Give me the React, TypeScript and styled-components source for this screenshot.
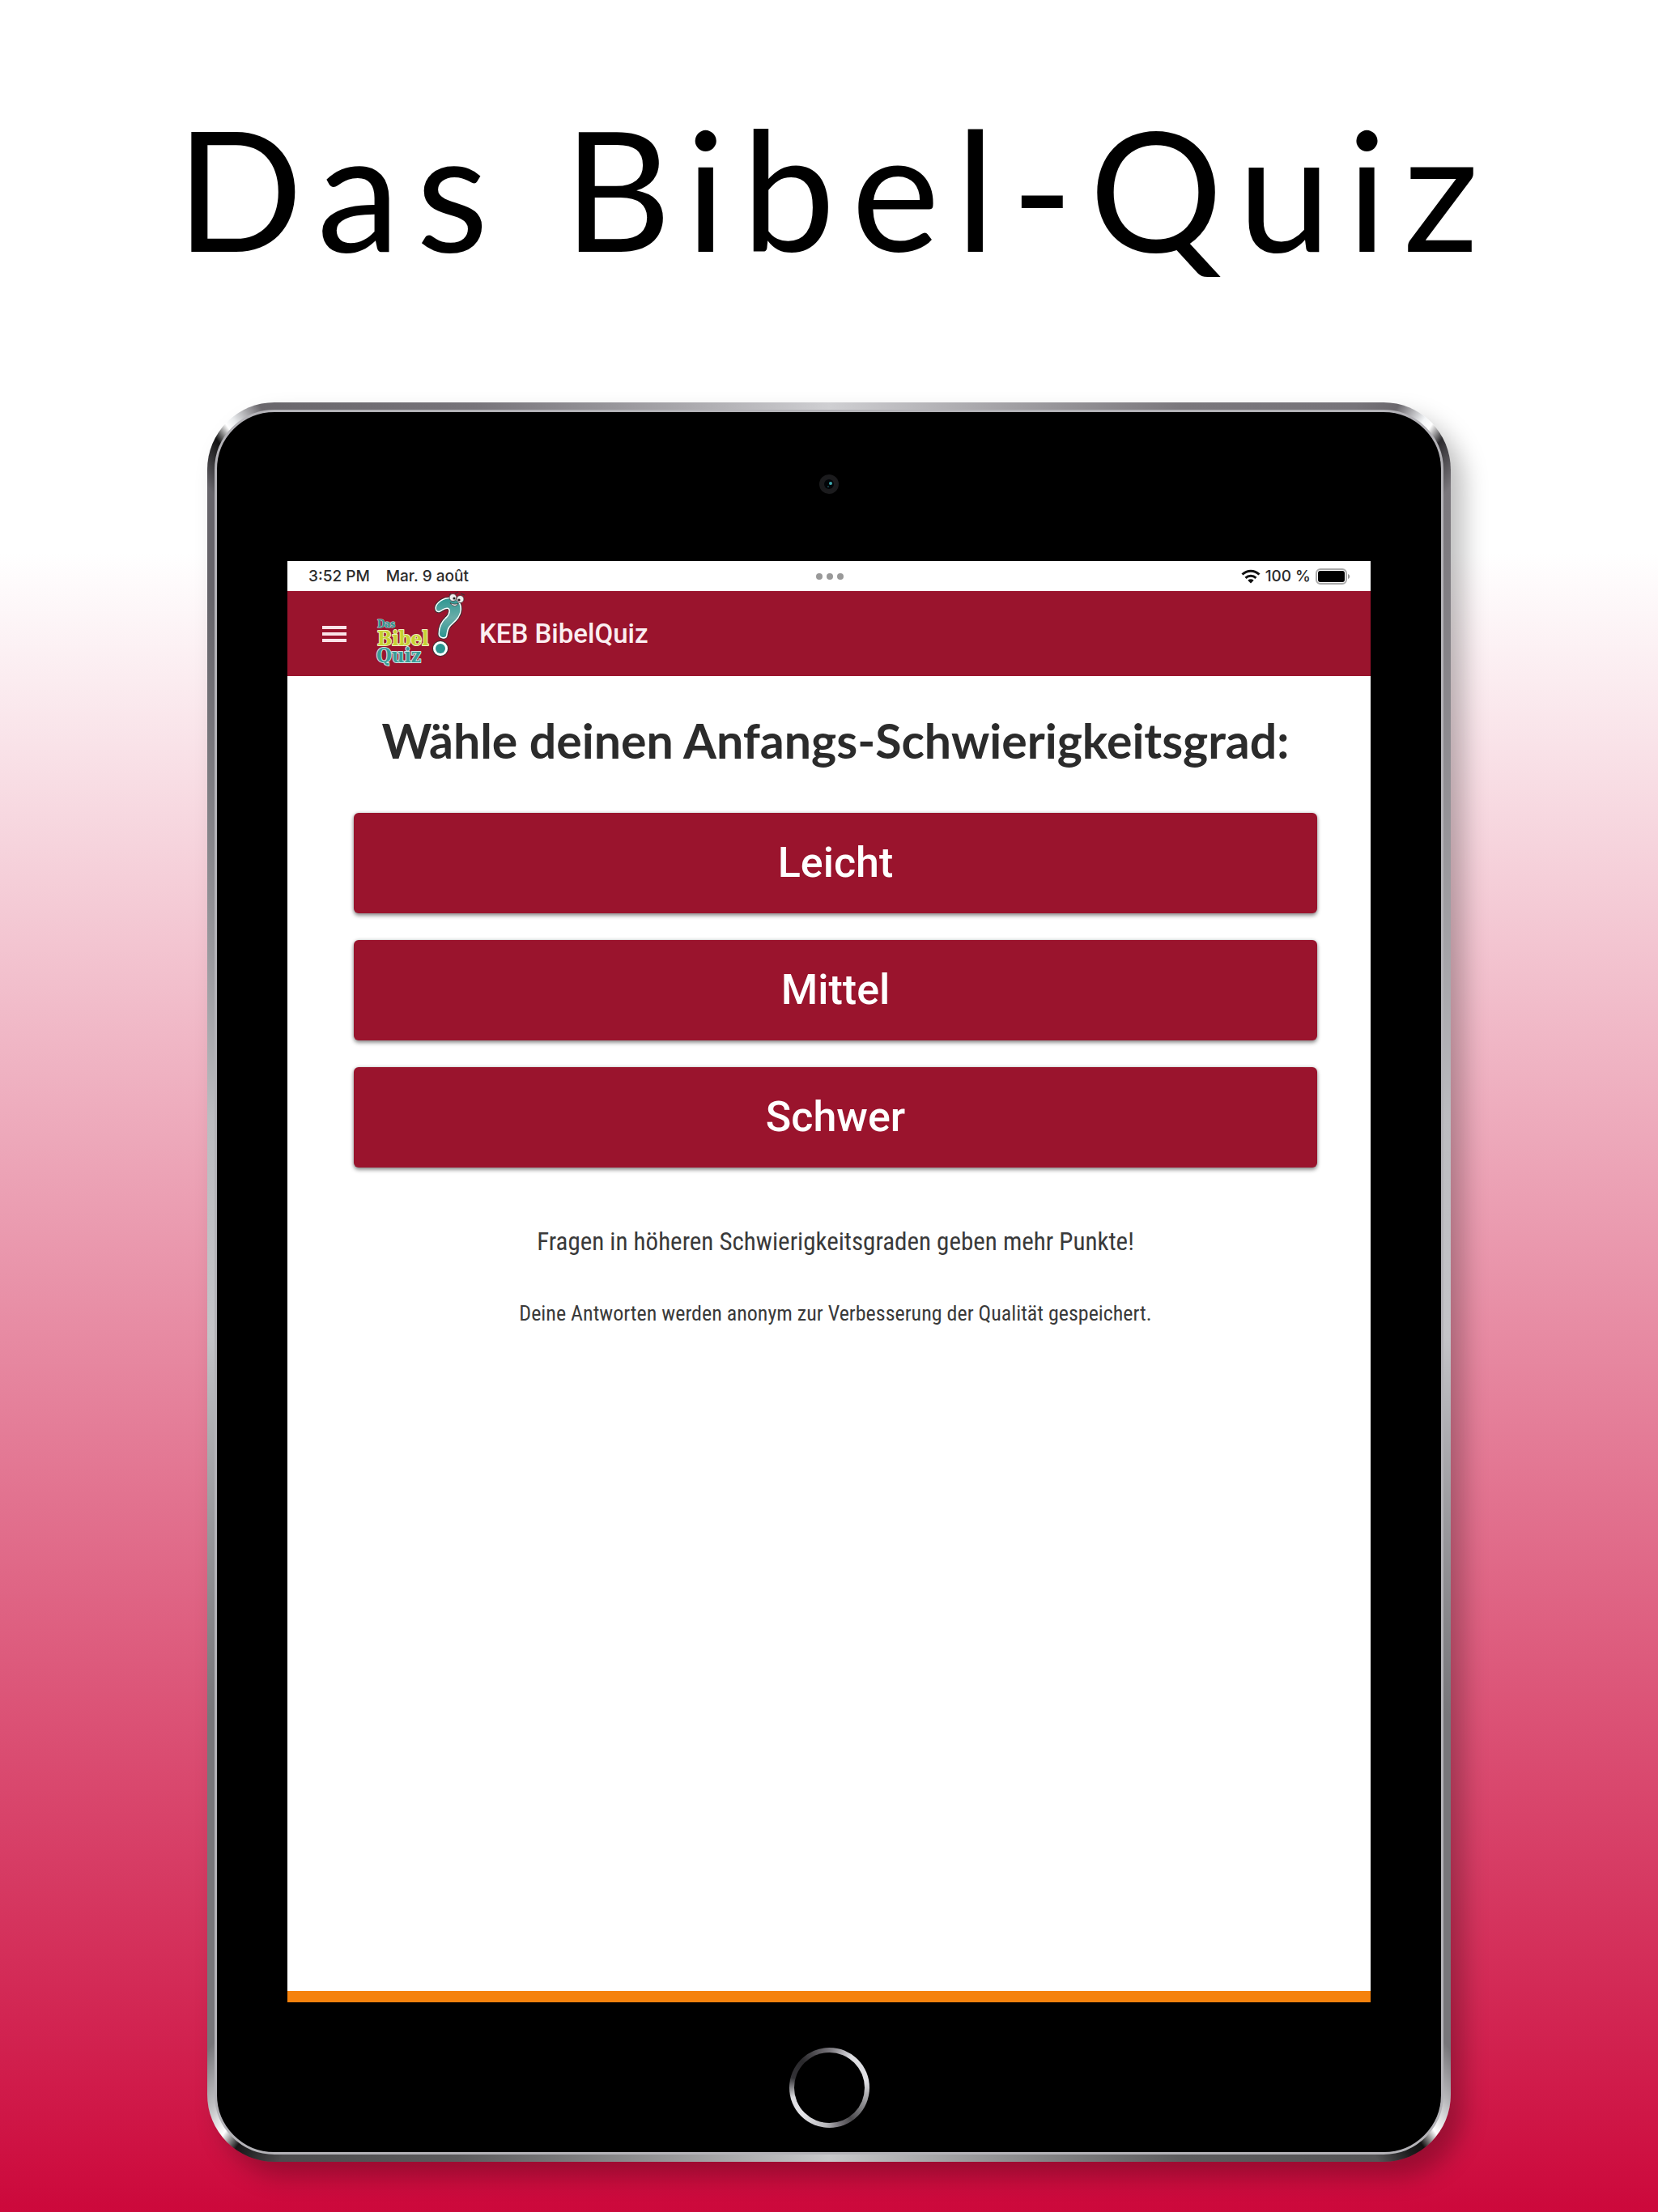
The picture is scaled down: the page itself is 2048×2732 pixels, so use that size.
import React from "react";
import styled, { createGlobalStyle } from "styled-components";

const GlobalStyle = createGlobalStyle`
  *, *::before, *::after { box-sizing: border-box; }
  body { margin: 0; }
`;

const crimson = "#9a142d";

const Page = styled.main`
  min-height: 100vh;
  display: flex;
  flex-direction: column;
  align-items: center;
  padding: 108px 0 63px;
  background: linear-gradient(180deg, #fff 0%, #fff 25%, #cc083b 100%);
`;

const PageTitle = styled.h1`
  margin: 0 0 141px;
  padding-left: 16px;
  font: 400 206px/248px Lato, "Open Sans", sans-serif;
  letter-spacing: 20px;
  text-align: center;
  color: #000;
`;

const Device = styled.section`
  width: 75%;
  padding: 9px;
  border-radius: 83px;
  background: conic-gradient(
    #cfcfd2 0deg, #7a777c 22deg, #77747a 31deg, #6a676c 33deg, #f4f6f8 34.6deg, #ffffff 35.1deg,
    #2c2b2e 36deg, #454347 36.6deg, #7a777c 38deg, #bcbcc0 75deg, #c4c4c8 95deg, #77767a 125deg,
    #77767a 141deg, #b9b9bc 143deg, #ffffff 144.5deg, #111 145.5deg, #1c1c1d 146.3deg,
    #555456 148deg, #5c5b5d 158deg, #c8c8ca 180deg, #5c5b5d 203deg, #4c4b4d 212deg,
    #161617 214.4deg, #ffffff 215.4deg, #c0c0c3 216.8deg, #77767a 219deg, #77767a 235deg,
    #c4c4c8 265deg, #bcbcc0 285deg, #66646a 318deg, #66646a 322deg, #111 324deg, #ffffff 324.9deg,
    #e8eaec 325.4deg, #6a676c 327deg, #77747a 338deg, #cfcfd2 360deg
  );
  box-shadow: 16px 18px 30px rgba(0, 0, 0, 0.26);
`;

const Bezel = styled.div`
  display: flex;
  flex-direction: column;
  align-items: center;
  padding: 77px 87px 30px;
  border: 3px solid #b4b3b8;
  border-radius: 74px;
  background: #000;
`;

const Camera = styled.svg`
  width: 24px;
  height: 24px;
  margin-bottom: 83px;
`;

const Screen = styled.div`
  width: 100%;
  aspect-ratio: 1338 / 1780;
  display: flex;
  flex-direction: column;
  background: #fff;
  border-bottom: 14px solid #f5820d;
`;

const HomeButton = styled.button`
  width: 99px;
  height: 99px;
  margin-top: 56px;
  padding: 6px;
  border: 0;
  border-radius: 50%;
  background: conic-gradient(
    #77747a 0deg, #dcdce0 35deg, #e2e2e6 80deg, #b0b0b4 100deg, #4a494c 145deg, #77747a 165deg,
    #b8b8bc 185deg, #e6e6ea 225deg, #dcdce0 255deg, #333236 285deg, #2a292c 315deg, #77747a 360deg
  );

  &::before {
    content: "";
    display: block;
    width: 100%;
    height: 100%;
    border-radius: 50%;
    background: #000;
  }
`;

const StatusBar = styled.div`
  display: grid;
  grid-template-columns: 1fr auto 1fr;
  align-items: center;
  height: 37px;
  padding: 0 24px 0 26px;
  font: 500 19px/24px Inter, Roboto, sans-serif;
  color: #2b2b2b;
`;

const StatusGroup = styled.div<{ $end?: boolean; $gap: number }>`
  display: flex;
  align-items: center;
  justify-content: ${(p) => (p.$end ? "flex-end" : "flex-start")};
  gap: ${(p) => p.$gap}px;
`;

const Dots = styled.div`
  display: flex;
  gap: 5px;
`;

const Dot = styled.span`
  width: 8px;
  height: 8px;
  border-radius: 50%;
  background: #999;
`;

const AppBar = styled.header`
  display: flex;
  align-items: center;
  height: 105px;
  padding-left: 43px;
  background: ${crimson};
`;

const MenuButton = styled.button`
  display: flex;
  padding: 0;
  margin-right: 20px;
  border: 0;
  background: none;
`;

const AppName = styled.span`
  margin-left: 8px;
  font: 500 33px/40px Roboto, sans-serif;
  color: #fbeef1;
`;

const Content = styled.div`
  display: flex;
  flex-direction: column;
  padding: 44px 66px 0 82px;
  text-align: center;
`;

const Question = styled.h2`
  margin: 0 0 53px;
  font: 700 59px/72px Lato, "Open Sans", sans-serif;
  color: #2b2b2b;
`;

const Choices = styled.div`
  display: flex;
  flex-direction: column;
  gap: 33px;
`;

const Choice = styled.button`
  height: 124px;
  border: 0;
  border-radius: 6px;
  background: ${crimson};
  box-shadow: 0 3px 5px rgba(0, 0, 0, 0.4), 0 0 4px rgba(0, 0, 0, 0.2);
  font: 500 52px/64px Roboto, sans-serif;
  color: #fff;
`;

const Note = styled.p<{ $small?: boolean }>`
  margin: ${(p) => (p.$small ? "40px" : "68px")} 0 0;
  font: 400 ${(p) => (p.$small ? 26 : 31)}px/48px "Roboto Condensed", "Open Sans Condensed", sans-serif;
  color: #3a3a3a;
`;

function Logo() {
  const mark =
    "M91 22C90 17 97 10.500 105 9.500C115 8 121 14 120.500 23C120 32 113 37 108 42C104 46 104 50 103 55C102 58.500 95 57.500 95 53C95 45 98 38 104 33C109 28 109 21 105 20.500C101 20 98 23 95 24.500C93 25.500 91 24 91 22Z";
  return (
    <svg width="136" height="105" viewBox="0 0 136 105" role="img" aria-label="Das Bibel Quiz">
      <defs>
        <linearGradient id="teal" x1="0" y1="0" x2="0" y2="1">
          <stop offset="0" stopColor="#2f9792" />
          <stop offset="0.500" stopColor="#6aada9" />
          <stop offset="1" stopColor="#2b9490" />
        </linearGradient>
      </defs>
      <g
        fontFamily='"DejaVu Serif Condensed", "DejaVu Serif", serif'
        fontWeight="700"
        strokeLinejoin="round"
        paintOrder="stroke"
      >
        <text x="18" y="45" fontSize="12" fill="#2f9792" stroke="#b9d8d6" strokeWidth="1">Das</text>
        <text x="18" y="67" fontSize="24" fill="#c6d233" stroke="#eef0c0" strokeWidth="2">Bibel</text>
        <text x="17" y="88" fontSize="24" fill="#3a9c98" stroke="#cfe6e4" strokeWidth="2">Quiz</text>
      </g>
      <path d={mark} fill="none" stroke="#3c3034" strokeWidth="5" strokeLinejoin="round" />
      <path d={mark} fill="url(#teal)" stroke="#fff" strokeWidth="3" strokeLinejoin="round" paintOrder="stroke" />
      <circle cx="96" cy="71" r="10" fill="#3c3034" />
      <circle cx="96" cy="71" r="9" fill="#fff" />
      <circle cx="96" cy="71" r="6" fill="#2b9490" />
      <path d="M108 14.500C111 19.500 116 19.500 118 15.500C115 16.500 111 16.500 108 14.500Z" fill="#fff" stroke="#3c3034" strokeWidth="0.800" />
      <path d="M107 5L109 3M114 3L118 1M121 3L126 5" stroke="#3c3034" strokeWidth="1.200" fill="none" />
      <circle cx="111.500" cy="8" r="4.500" fill="#eee" stroke="#3c3034" strokeWidth="0.800" />
      <circle cx="120.500" cy="10" r="4.500" fill="#eee" stroke="#3c3034" strokeWidth="0.800" />
      <circle cx="113" cy="9" r="1.600" fill="#222" />
      <circle cx="119" cy="11" r="1.600" fill="#222" />
    </svg>
  );
}

const levels = ["Leicht", "Mittel", "Schwer"];

export default function App() {
  return (
    <>
      <GlobalStyle />
      <Page>
        <PageTitle>Das Bibel-Quiz</PageTitle>
        <Device>
          <Bezel>
            <Camera viewBox="0 0 24 24" aria-hidden="true">
              <circle cx="12" cy="12" r="12" fill="#1b1b1d" />
              <circle cx="12" cy="12" r="6" fill="#020508" />
              <circle cx="14" cy="11" r="2" fill="#3fa9ae" />
              <circle cx="11" cy="15" r="1" fill="#17474d" />
            </Camera>
            <Screen>
              <StatusBar>
                <StatusGroup $gap={20}>
                  <span>3:52 PM</span>
                  <span>Mar. 9 août</span>
                </StatusGroup>
                <Dots>
                  <Dot />
                  <Dot />
                  <Dot />
                </Dots>
                <StatusGroup $end $gap={6}>
                  <svg width="24" height="18" viewBox="0 0 24 18" aria-hidden="true">
                    <g fill="none" stroke="#111" strokeWidth="3">
                      <path d="M1.500 6.500A15 15 0 0 1 22.500 6.500" />
                      <path d="M5.500 10.800A9.500 9.500 0 0 1 18.500 10.800" />
                    </g>
                    <path d="M12 17.500L8.300 13.800A5.400 5.400 0 0 1 15.700 13.800Z" fill="#111" />
                  </svg>
                  <span>100 %</span>
                  <svg width="44" height="20" viewBox="0 0 44 20" aria-hidden="true">
                    <rect x="1" y="1" width="37" height="18" rx="5" fill="#fff" stroke="#aaa" strokeWidth="2" />
                    <rect x="3" y="3" width="33" height="14" rx="3" fill="#000" />
                    <path d="M40 7C43 8 43 12 40 13Z" fill="#999" />
                  </svg>
                </StatusGroup>
              </StatusBar>
              <AppBar>
                <MenuButton aria-label="Menü">
                  <svg width="30" height="20" viewBox="0 0 30 20" aria-hidden="true">
                    <path d="M0 2H30M0 10H30M0 18H30" stroke="#fbe3e8" strokeWidth="4" />
                  </svg>
                </MenuButton>
                <Logo />
                <AppName>KEB BibelQuiz</AppName>
              </AppBar>
              <Content>
                <Question>Wähle deinen Anfangs-Schwierigkeitsgrad:</Question>
                <Choices>
                  {levels.map((level) => (
                    <Choice key={level}>{level}</Choice>
                  ))}
                </Choices>
                <Note>Fragen in höheren Schwierigkeitsgraden geben mehr Punkte!</Note>
                <Note $small>Deine Antworten werden anonym zur Verbesserung der Qualität gespeichert.</Note>
              </Content>
            </Screen>
            <HomeButton aria-label="Home" />
          </Bezel>
        </Device>
      </Page>
    </>
  );
}
